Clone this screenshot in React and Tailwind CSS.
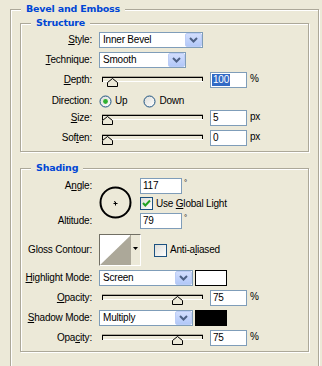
const GROUP = 'border border-[#aca899] shadow-[inset_1px_1px_0_#fff,1px_1px_0_#fff]';

function Title({ children }) {
  return (
    <div className="-mt-[8px] ml-[10px] w-fit px-[5px] bg-[#ece9d8] text-[#0046d5] font-bold font-['DejaVu_Sans',Verdana,sans-serif] text-[9.5px] leading-[13px] tracking-[-0.2px]">
      {children}
    </div>
  );
}

function Group({ title, className, children }) {
  return (
    <div className={`ml-[9px] w-[289px] pb-[5px] ${GROUP} ${className}`}>
      <Title>{title}</Title>
      {children}
    </div>
  );
}

function Row({ label, className, children }) {
  return (
    <div className={`flex items-center h-[16px] ${className}`}>
      <div className="w-[71px] shrink-0 text-right whitespace-nowrap">{label}</div>
      <div className="ml-[7px] flex items-center">{children}</div>
    </div>
  );
}

function Chevron() {
  return (
    <svg width="9" height="6" viewBox="0 0 9 6">
      <path d="M1 1 L4.5 4.5 L8 1" fill="none" stroke="#4d6185" strokeWidth="2" />
    </svg>
  );
}

function Select({ w, value }) {
  return (
    <div className={`flex h-[16px] border border-[#7f9db9] bg-white ${w}`}>
      <span className="flex-1 pl-[3px] leading-[14px] whitespace-nowrap">{value}</span>
      <span className="w-[17px] h-[14px] flex items-center justify-center rounded-[2px] border border-[#bccdf6] bg-gradient-to-b from-[#d2defd] to-[#b2c8f8]">
        <Chevron />
      </span>
    </div>
  );
}

function Field({ w, pad, children }) {
  return (
    <div className={`h-[16px] border border-[#7f9db9] bg-white leading-[14px] ${w} ${pad}`}>
      {children}
    </div>
  );
}

function Slider({ thumb }) {
  return (
    <svg width="101" height="16" className="ml-[3px] shrink-0">
      <rect x="0" y="4" width="101" height="1" fill="#aca899" />
      <rect x="0.5" y="5.5" width="100" height="4" fill="#ece9d8" stroke="#000" />
      <rect x="1" y="9" width="100" height="1" fill="#fff" />
      <path
        d={`M${thumb + 0.5} 14.5 V10.5 L${thumb + 5.5} 6.5 L${thumb + 10.5} 10.5 V14.5 Z`}
        fill="#ece9d8"
        stroke="#000"
      />
    </svg>
  );
}

function SliderRow({ label, className, thumb, value, unit, selected }) {
  return (
    <Row label={label} className={className}>
      <Slider thumb={thumb} />
      <div className="ml-[7px]">
        {selected ? (
          <Field w="w-[37px]" pad="pl-[1px]">
            <span className="inline-block bg-[#316ac5] text-white px-[1px] leading-[12px]">{value}</span>
          </Field>
        ) : (
          <Field w="w-[37px]" pad="pl-[2px]">{value}</Field>
        )}
      </div>
      <span className="ml-[3px] self-start leading-[14px]">{unit}</span>
    </Row>
  );
}

function Radio({ checked }) {
  return (
    <svg width="13" height="13" className="shrink-0">
      <defs>
        <linearGradient id="rgrad" x1="0" y1="0" x2="1" y2="1">
          <stop offset="0" stopColor="#dcdcd7" />
          <stop offset="1" stopColor="#ffffff" />
        </linearGradient>
      </defs>
      <circle cx="6.5" cy="6.5" r="5.5" fill="url(#rgrad)" stroke="#1c5180" />
      {checked && <circle cx="6.5" cy="6.5" r="2.4" fill="#30b030" />}
    </svg>
  );
}

function Check({ checked }) {
  return (
    <svg width="13" height="13" className="shrink-0">
      <defs>
        <linearGradient id="cgrad" x1="0" y1="0" x2="1" y2="1">
          <stop offset="0" stopColor="#dcdcd7" />
          <stop offset="1" stopColor="#ffffff" />
        </linearGradient>
      </defs>
      <rect x="0.5" y="0.5" width="12" height="12" fill="url(#cgrad)" stroke="#1c5180" />
      {checked && <path d="M3 6 L5.3 8.5 L10 3.5" fill="none" stroke="#21a121" strokeWidth="2" />}
    </svg>
  );
}

function Swatch({ color }) {
  return <div className={`ml-[2px] w-[32px] h-[16px] border border-black ${color}`} />;
}

export default function App() {
  return (
    <div className="w-[322px] h-[366px] overflow-hidden bg-[#ece9d8] pt-[9px] pl-[10px] font-['Liberation_Sans',Arial,sans-serif] text-[10px] tracking-[-0.2px] leading-[16px] text-black">
      <div className={`w-[309px] h-[380px] ${GROUP}`}>
        <Title>Bevel and Emboss</Title>

        <Group title="Structure" className="mt-[8px]">
          <Row label={<><u>S</u>tyle:</>} className="mt-[3px]">
            <Select w="w-[104px]" value="Inner Bevel" />
          </Row>
          <Row label={<><u>T</u>echnique:</>} className="mt-[4px]">
            <Select w="w-[87px]" value="Smooth" />
          </Row>
          <SliderRow label={<><u>D</u>epth:</>} className="mt-[4px]" thumb={5} value="100" unit="%" selected />
          <Row label="Direction:" className="mt-[5px]">
            <Radio checked />
            <span className="ml-[3px]">Up</span>
            <span className="ml-[16px] flex items-center">
              <Radio />
              <span className="ml-[3px]">Down</span>
            </span>
          </Row>
          <SliderRow label={<><u>S</u>ize:</>} className="mt-[1px]" thumb={0} value="5" unit="px" />
          <SliderRow label={<>Sof<u>t</u>en:</>} className="mt-[4px]" thumb={0} value="0" unit="px" />
        </Group>

        <Group title="Shading" className="mt-[16px]">
          <div className="flex mt-[4px]">
            <div className="w-[71px] shrink-0 flex flex-col text-right">
              <div className="h-[16px]">A<u>n</u>gle:</div>
              <div className="h-[19px]" />
              <div className="h-[16px]">Altitude:</div>
            </div>
            <div className="ml-[7px] pt-[8px]">
              <svg width="33" height="33">
                <circle cx="16.5" cy="16.5" r="15" fill="none" stroke="#000" strokeWidth="2" />
                <path d="M14.5 17.5 H18.5 M16.5 16 V19.5 M16.5 17 L15.5 15" stroke="#000" strokeWidth="1" fill="none" />
              </svg>
            </div>
            <div className="ml-[8px] flex flex-col">
              <div className="flex">
                <Field w="w-[42px]" pad="pl-[2px]">117</Field>
                <span className="ml-[2px] text-[8px] leading-[10px]">°</span>
              </div>
              <div className="flex items-center h-[13px] mt-[3px]">
                <Check checked />
                <span className="ml-[3px] whitespace-nowrap">Use <u>G</u>lobal Light</span>
              </div>
              <div className="flex mt-[3px]">
                <Field w="w-[42px]" pad="pl-[2px]">79</Field>
                <span className="ml-[2px] text-[8px] leading-[10px]">°</span>
              </div>
            </div>
          </div>

          <div className="flex items-center h-[32px] mt-[5px]">
            <div className="w-[71px] shrink-0 text-right whitespace-nowrap">Gloss Contour:</div>
            <div className="ml-[7px] flex w-[42px] h-[32px] border-t border-l border-[#716f64] border-r border-b border-r-white border-b-white">
              <svg width="31" height="30" className="shrink-0 border-r border-[#aca899]">
                <rect x="0" y="0" width="31" height="30" fill="#fff" />
                <path d="M0 30 L31 0 V30 Z" fill="#aca899" />
              </svg>
              <div className="flex-1 flex justify-center pt-[12px]">
                <svg width="5" height="3">
                  <path d="M0 0 H5 L2.5 3 Z" fill="#000" />
                </svg>
              </div>
            </div>
            <div className="ml-[13px] flex items-center">
              <Check />
              <span className="ml-[3px]">Anti-a<u>l</u>iased</span>
            </div>
          </div>

          <Row label={<><u>H</u>ighlight Mode:</>} className="mt-[4px]">
            <Select w="w-[94px]" value="Screen" />
            <Swatch color="bg-white" />
          </Row>
          <SliderRow label={<><u>O</u>pacity:</>} className="mt-[4px]" thumb={70} value="75" unit="%" />
          <Row label={<><u>S</u>hadow Mode:</>} className="mt-[4px]">
            <Select w="w-[94px]" value="Multiply" />
            <Swatch color="bg-black" />
          </Row>
          <SliderRow label={<>Opa<u>c</u>ity:</>} className="mt-[4px]" thumb={70} value="75" unit="%" />
        </Group>
      </div>
    </div>
  );
}
